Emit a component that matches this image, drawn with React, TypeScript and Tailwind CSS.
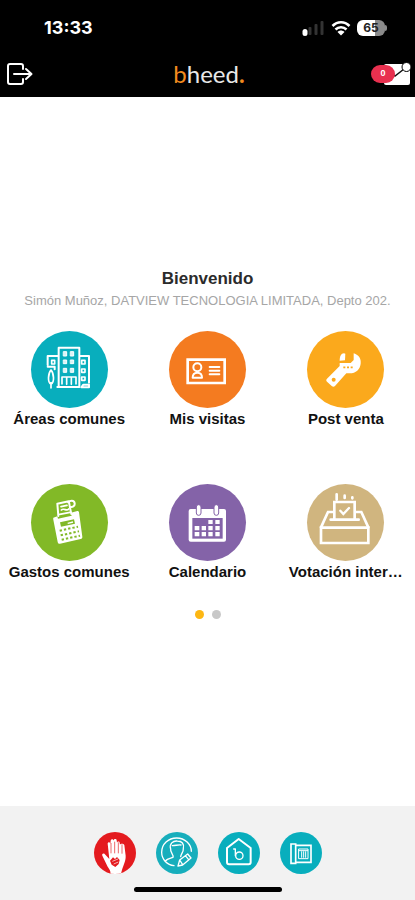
import type { ReactNode } from 'react';

type Tile = { label: string; color: string; icon: ReactNode };

const line = {
  fill: 'none',
  stroke: '#fff',
  strokeLinejoin: 'round' as const,
  strokeLinecap: 'round' as const,
};

function Buildings() {
  return (
    <svg viewBox="95 33 231 231" className="size-full" aria-hidden="true">
      <g {...line} strokeWidth="6">
        <path d="M178 200V83h62v117M145 135v-27h33M240 108h29v80M145 140h21v8M174 201h66" />
        <path d="M155 150c-9 10-11 38 0 42 11-4 9-32 0-42zM155 188v16" strokeWidth="5" />
        <path d="M188 192v-21h42v21M202 173v20M216 173v20" strokeWidth="5" />
        <path d="M246 202l6-8h17v8z" />
      </g>
      <g {...line} strokeWidth="3" fill="#d9f3f6">
        <path d="M193 95h9v13h-9zM214 95h9v13h-9zM193 120h9v11h-9zM214 120h9v11h-9zM193 145h9v12h-9zM214 145h9v12h-9z" />
      </g>
      <g {...line} strokeWidth="5">
        <path d="M157 121h9v11h-9zM247 121h10v11h-10zM247 147h10v10h-10zM247 171h10v10h-10z" />
      </g>
    </svg>
  );
}

function IdCard() {
  return (
    <svg viewBox="97 33 231 231" className="size-full" aria-hidden="true">
      <g {...line}>
        <path d="M153 119h111v70H153z" strokeWidth="8" strokeLinejoin="miter" />
        <circle cx="182" cy="142" r="12" strokeWidth="6" />
        <path d="M168 173c0-10 5-15 14-15s14 5 14 15z" strokeWidth="6" />
        <path d="M219 141h29M219 152h29M219 163h29" strokeWidth="6" />
      </g>
    </svg>
  );
}

function Wrench() {
  return (
    <svg viewBox="99 33 231 231" className="size-full" aria-hidden="true">
      <g fill="#fff">
        <path d="M197 122c0-10 2-17 7-21 4-2 8-2 10 0l-1 20z" />
        <path d="M239 100c16 5 23 17 21 31-2 17-14 29-33 29h-10l-34 38c-3 3-6 3-9 1l-15-14c-3-3-3-6 0-9l38-38v-9h33l9-9z" />
      </g>
      <circle cx="179" cy="179" r="6" fill="#fba91c" />
      <path d="M208 142h6M219 142h6M230 142h6" stroke="#fba91c" strokeWidth="5" />
    </svg>
  );
}

function Calculator() {
  return (
    <svg viewBox="95 26 231 231" className="size-full" aria-hidden="true">
      <g {...line} strokeWidth="6">
        <path d="M177 122l-3-37 34-7c3 6 2 12 4 18M207 81c4-6 18-8 19 3 1 9-7 12-14 10M212 97l4 19" />
        <path d="M185 94l18-4M186 104c8-8 16 6 22-3M181 117l31-6" strokeWidth="5" />
      </g>
      <path fill="#fff" d="M162 127l12-4 2 7 41-9-2-9 19-5c3 0 4 1 5 4l10 73c0 4-1 6-5 7l-62 14c-4 1-6-1-7-5l-13-67c-1-3 0-5 0-6z" />
      <path d="M182 141l42-9 3 13-42 9z" fill="#82b927" />
      <path d="M205 144l16-4" stroke="#fff" strokeWidth="4" />
      <g stroke="#82b927" strokeWidth="6" strokeDasharray="7 6">
        <path d="M181 166l55-12M184 180l55-12M187 193l55-12" />
      </g>
    </svg>
  );
}

function Calendar() {
  return (
    <svg viewBox="97 26 231 231" className="size-full" aria-hidden="true">
      <rect x="156" y="101" width="112" height="98" rx="6" fill="#fff" />
      <path d="M167 128h91v62h-91z" fill="#8463a8" />
      <path
        d="M215 134h13v12h-13zM236 134h13v12h-13zM174 152h14v13h-14zM195 152h13v13h-13zM215 152h13v13h-13zM236 152h13v13h-13zM174 170h14v13h-14zM195 170h13v13h-13zM215 170h13v13h-13zM236 170h13v13h-13z"
        fill="#fff"
      />
      <g fill="#fff" stroke="#8463a8" strokeWidth="3">
        <rect x="179" y="88" width="14" height="32" rx="7" />
        <rect x="232" y="88" width="14" height="32" rx="7" />
      </g>
    </svg>
  );
}

function BallotBox() {
  return (
    <svg viewBox="99 26 231 231" className="size-full" aria-hidden="true">
      <g {...line} strokeWidth="8" strokeLinejoin="miter">
        <path d="M141 157h142v46H141z" />
        <path d="M141 156l21-46h14M247 110h15l21 46" />
        <path d="M181 132V80h61v52" />
        <path d="M170 133h84" />
        <path d="M199 106l9 10 17-18" strokeWidth="7" />
        <path d="M188 57v16M212 61v7M235 66v3" />
      </g>
    </svg>
  );
}

const tiles: Tile[] = [
  { label: 'Áreas comunes', color: 'bg-[#08aebd]', icon: <Buildings /> },
  { label: 'Mis visitas', color: 'bg-[#f47b20]', icon: <IdCard /> },
  { label: 'Post venta', color: 'bg-[#fba91c]', icon: <Wrench /> },
  { label: 'Gastos comunes', color: 'bg-[#82b927]', icon: <Calculator /> },
  { label: 'Calendario', color: 'bg-[#8463a8]', icon: <Calendar /> },
  { label: 'Votación inter…', color: 'bg-[#d0b57f]', icon: <BallotBox /> },
];

function Hand() {
  return (
    <svg viewBox="27 35 126 126" className="size-full" aria-hidden="true">
      <path
        fill="#fff"
        d="M76 161c2-8-2-14-8-22L52 106c-2-5 3-8 7-5l14 15-5-46c0-6 7-6 8 0l1-9c1-6 8-6 9 0v-1c1-6 9-5 9 0l1 7c1-5 8-5 8 0l1 6c1-4 11-4 13 1l4 32c1 18-9 30-14 55z"
      />
      <path d="M78 68v31M89 64v35M100 66v33M111 72v28" stroke="#e41b1f" strokeWidth="2" />
      <path d="M75 121l9-10 6 5 6-6 8 9-3 12-10 9-11-7z" fill="#e41b1f" />
      <path d="M82 123l17-7M86 131l14-6" stroke="#fff" strokeWidth="2" />
    </svg>
  );
}

function ProfileEdit() {
  return (
    <svg viewBox="215 35 126 126" className="size-full" aria-hidden="true">
      <g {...line} strokeWidth="4">
        <path d="M269 136c-20-2-37-18-37-40 0-25 20-43 45-43s44 19 44 40" />
        <path d="M243 122c6-8 16-8 23-11 3-8-9-14-7-25-5-16 7-25 20-24 14 0 21 9 18 22 1 12-7 16-8 25M264 76c10 0 17-3 26-2" />
        <path d="M281 137l5-18 24-18 10 12-25 21zM286 119l9 14M303 106l10 12" />
      </g>
    </svg>
  );
}

function HomeB() {
  return (
    <svg viewBox="28 35 126 126" className="size-full" aria-hidden="true">
      <g {...line}>
        <path d="M90 56l36 27v43c0 4-2 6-6 6H61c-4 0-6-2-6-6V83z" strokeWidth="6" />
        <path d="M80 86v20M75 86h5" strokeWidth="4" />
        <circle cx="92" cy="106" r="11" strokeWidth="4" />
      </g>
    </svg>
  );
}

function Intercom() {
  return (
    <svg viewBox="215 35 126 126" className="size-full" aria-hidden="true">
      <g {...line} strokeWidth="5" strokeLinejoin="miter">
        <path d="M248 71h14v58h-14zM262 75h46v51h-46" />
        <path d="M272 86h27v29h-27z" strokeWidth="3" />
        <path d="M273 91h25M280 94v17M286 94v17M292 94v17" strokeWidth="3" />
      </g>
    </svg>
  );
}

const shortcuts: Tile[] = [
  { label: 'Emergencia', color: 'bg-[#e41b1f]', icon: <Hand /> },
  { label: 'Perfil', color: 'bg-[#17aebc]', icon: <ProfileEdit /> },
  { label: 'Inicio', color: 'bg-[#08aebd]', icon: <HomeB /> },
  { label: 'Citófono', color: 'bg-[#08aebd]', icon: <Intercom /> },
];

function StatusBar() {
  return (
    <div className="flex h-14 items-center justify-between pr-7 pl-11">
      <time className="font-[Inter,sans-serif] text-lg font-bold">13:33</time>
      <div className="flex items-center gap-1.5">
        <svg viewBox="0 0 23 16" className="h-4 w-6" aria-hidden="true">
          <rect x="1" y="9" width="5" height="7" rx="2.500" fill="#fff" />
          <g fill="#333">
            <rect x="7" y="7" width="3" height="8" rx="1" />
            <rect x="13" y="4" width="3" height="11" rx="1" />
            <rect x="19" y="1" width="3" height="14" rx="1" />
          </g>
        </svg>
        <svg viewBox="0 0 19 16" className="h-4 w-5" aria-hidden="true">
          <g fill="none" stroke="#fff" strokeWidth="2.6">
            <path d="M1 6c5-5 12-5 17 0" />
            <path d="M4 9.500c3-3 8-3 11 0" />
          </g>
          <path d="M6 12c2-2 5-2 7 0l-3.500 3.500z" fill="#fff" />
        </svg>
        <div className="flex items-center">
          <div className="flex h-4 w-7 items-center justify-center rounded-md bg-linear-to-r from-white from-65% to-[#8a8a8a] to-65% font-[Inter,sans-serif] text-xs font-bold text-[#222]">
            65
          </div>
          <div className="h-1.5 w-0.5 rounded-r-sm bg-[#8a8a8a]" />
        </div>
      </div>
    </div>
  );
}

function TopBar() {
  return (
    <div className="grid h-[41px] grid-cols-3 items-center pr-1 pl-[7px] pb-1.5">
      <button type="button" aria-label="Salir" className="justify-self-start">
        <svg viewBox="0 0 26 22" className="h-[22px] w-[26px]" aria-hidden="true">
          <g {...line} strokeWidth="2">
            <path d="M16 6V3c0-1.400-.6-2-2-2H3C1.600 1 1 1.600 1 3v16c0 1.400.6 2 2 2h11c1.400 0 2-.6 2-2v-3" />
            <path d="M7 11h17M19 6l5.500 5-5.500 5" />
          </g>
        </svg>
      </button>
      <div className="justify-self-center font-[Lato,sans-serif] text-2xl leading-none text-[#e8e8e8]">
        <span className="text-[#f18a1f]">b</span>heed<span className="font-bold text-[#f18a1f]">.</span>
      </div>
      <button type="button" aria-label="Mensajes" className="relative justify-self-end">
        <svg viewBox="0 0 28 24" className="h-6 w-7" aria-hidden="true">
          <rect x="1" y="2" width="26" height="21" rx="2" fill="#fff" />
          <path d="M2 6l10 8 9-7" fill="none" stroke="#111" strokeWidth="1.500" />
          <circle cx="23.500" cy="5" r="4.500" fill="#fff" stroke="#000" strokeWidth="1" />
        </svg>
        <span className="absolute top-[3px] -left-3 flex h-[18px] w-6 items-center justify-center rounded-full bg-[#e8304f] text-[9px] font-bold text-white">
          0
        </span>
      </button>
    </div>
  );
}

export default function App() {
  return (
    <div className="flex min-h-screen flex-col bg-white font-['Liberation_Sans',Arial,sans-serif]">
      <header className="bg-black text-white">
        <StatusBar />
        <TopBar />
      </header>

      <main className="flex flex-1 flex-col pt-[172px]">
        <h1 className="text-center text-[17px] leading-5 font-bold text-[#2b2b2b]">Bienvenido</h1>
        <p className="mt-1 text-center text-[13px] leading-4 whitespace-nowrap text-[#a6a6a6]">
          Simón Muñoz, DATVIEW TECNOLOGIA LIMITADA, Depto 202.
        </p>
        <nav className="mt-[22px] grid grid-cols-3 gap-y-[55px]">
          {tiles.map((tile) => (
            <button key={tile.label} type="button" className="flex flex-col items-center">
              <span className={`block size-[77px] rounded-full ${tile.color}`}>{tile.icon}</span>
              <span className="pt-px text-[15px] leading-5 font-bold whitespace-nowrap text-[#111]">{tile.label}</span>
            </button>
          ))}
        </nav>
        <div className="mt-7 flex justify-center gap-2">
          <button type="button" aria-label="Página 1" className="size-[9px] rounded-full bg-[#fdb713]" />
          <button type="button" aria-label="Página 2" className="size-[9px] rounded-full bg-[#c8c8c8]" />
        </div>
      </main>

      <footer className="flex flex-col items-center bg-[#f2f2f2] pt-[26px] pb-2">
        <nav className="flex gap-5">
          {shortcuts.map((item) => (
            <button
              key={item.label}
              type="button"
              aria-label={item.label}
              className={`size-[42px] overflow-hidden rounded-full ${item.color}`}
            >
              {item.icon}
            </button>
          ))}
        </nav>
        <div className="mt-[13px] h-[5px] w-[148px] rounded-full bg-black" />
      </footer>
    </div>
  );
}
